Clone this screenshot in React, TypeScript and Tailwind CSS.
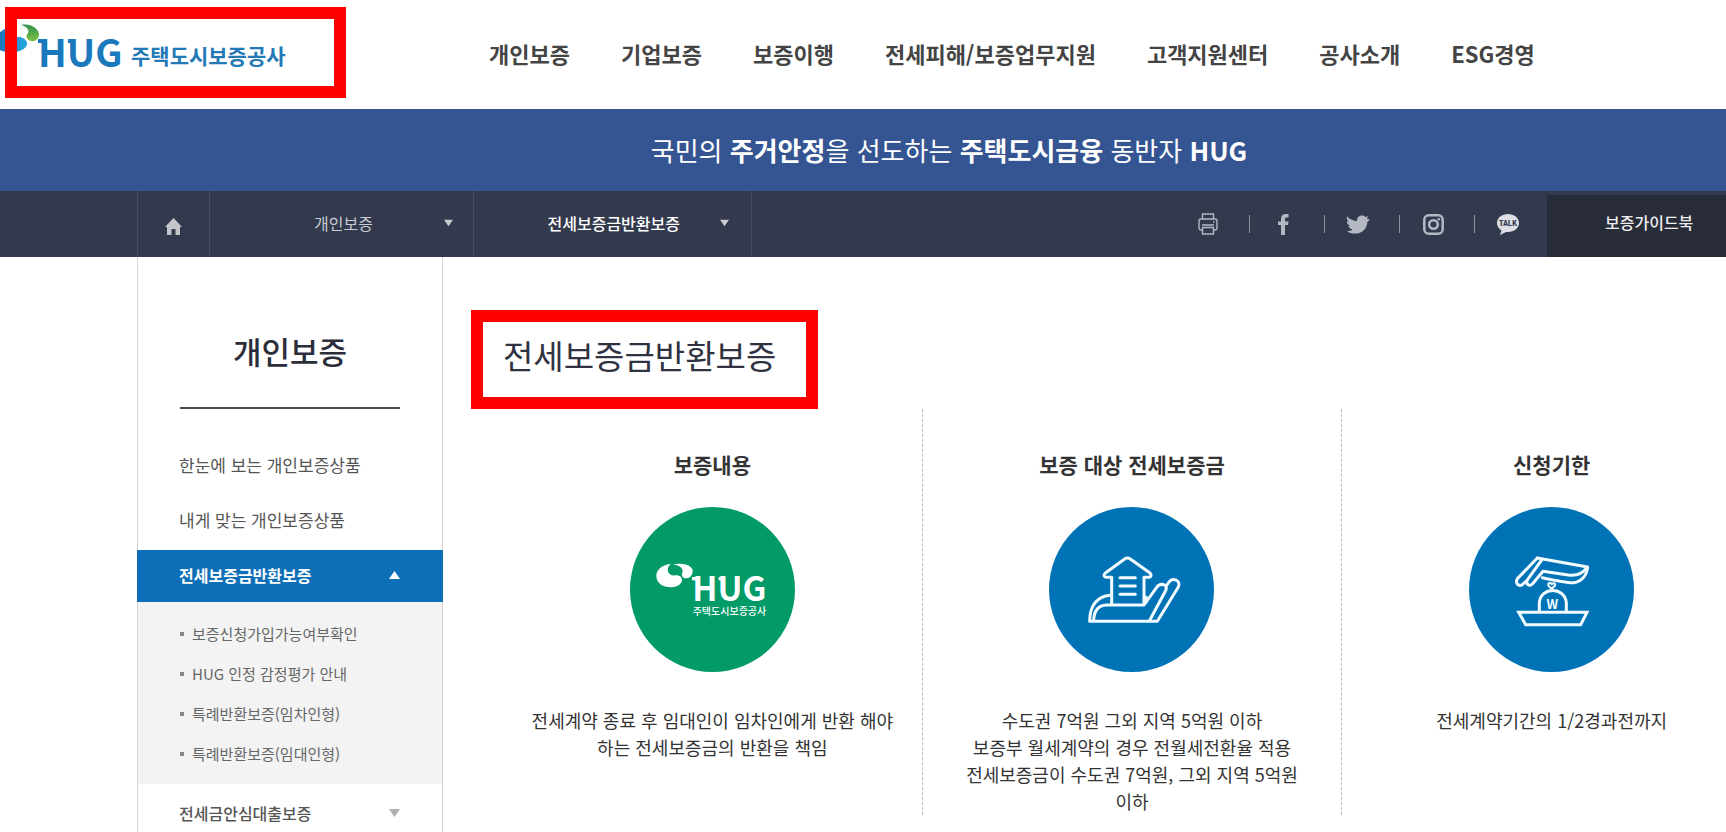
import type { ReactNode } from "react";

const NAV = [
  "개인보증",
  "기업보증",
  "보증이행",
  "전세피해/보증업무지원",
  "고객지원센터",
  "공사소개",
  "ESG경영",
];

const SUB_MENU = [
  "보증신청가입가능여부확인",
  "HUG 인정 감정평가 안내",
  "특례반환보증(임차인형)",
  "특례반환보증(임대인형)",
];

function Logo() {
  return (
    <a href="#" aria-label="HUG 주택도시보증공사" className="block">
      <svg width="300" height="76" viewBox="0 -8 300 76" aria-hidden="true">
        <defs>
          <linearGradient id="leaf" x1="0" y1="0" x2="0" y2="1">
            <stop offset="0" stopColor="#2f8f4e" />
            <stop offset="1" stopColor="#7cc142" />
          </linearGradient>
          <linearGradient id="drop" x1="0" y1="0" x2="1" y2="0">
            <stop offset="0" stopColor="#1b6fb8" />
            <stop offset="1" stopColor="#27a9e0" />
          </linearGradient>
        </defs>
        <path
          d="M8 3C-5 6-9 22 2 26c9 3 22 1 25-6 1-5-4-8-9-8C9 13 4 9 8 3Z"
          fill="url(#drop)"
        />
        <path
          d="M21 0c9-2 17 3 18 9 0 5-4 8-8 7-4-1-6-5-3-8 2-3-2-7-7-8Z"
          fill="url(#leaf)"
        />
        <g fill="#1a78bd" className="font-bold">
          <text x="38" y="42" fontSize="38">
            HUG
          </text>
          <rect x="38" y="14" width="5" height="4" />
          <rect x="68" y="14" width="5" height="4" />
        </g>
        <text x="131" y="39" fontSize="21" fill="#2279b5" className="font-bold">
          주택도시보증공사
        </text>
      </svg>
    </a>
  );
}

function Caret({ up = false, className }: { up?: boolean; className?: string }) {
  return (
    <svg width="11" height="8" viewBox="0 0 11 8" className={className} aria-hidden="true">
      <path d={up ? "M5.5 0 11 8H0Z" : "M0 0h11L5.5 8Z"} fill="currentColor" />
    </svg>
  );
}

function ShareLink({
  label,
  last = false,
  children,
}: {
  label: string;
  last?: boolean;
  children: ReactNode;
}) {
  return (
    <li className="flex items-center">
      <a href="#" aria-label={label} className="flex w-[66px] justify-center">
        {children}
      </a>
      {last ? <span className="w-1.5" /> : <span className="ml-2 h-[18px] w-px bg-[#8b909c]" />}
    </li>
  );
}

function ShareLinks() {
  return (
    <ul className="ml-auto flex items-center text-[#b3b8c3]">
      <ShareLink label="인쇄">
        <svg width="20" height="22" viewBox="0 0 20 22" fill="none" stroke="currentColor" strokeWidth="1.4">
          <path d="M4.500 6V1h11v5M4.500 17H3a2 2 0 0 1-2-2V8a2 2 0 0 1 2-2h14a2 2 0 0 1 2 2v7a2 2 0 0 1-2 2h-1.500" />
          <path d="M4.500 14.500h11V21h-11ZM4 12h12M15 9h1.500" />
        </svg>
      </ShareLink>
      <ShareLink label="페이스북">
        <svg width="11" height="21" viewBox="0 0 11 21" fill="currentColor">
          <path d="M3 21V11H0V7.500h3V5c0-3.300 1.800-5 5-5h2.500v3.500H8.800C7.400 3.500 7 4.100 7 5.300v2.200h3.500L10 11H7v10Z" />
        </svg>
      </ShareLink>
      <ShareLink label="트위터">
        <svg width="24" height="19" viewBox="0 0 25 19" fill="currentColor">
          <path d="M1 1c2.500 3 6 4.500 10.500 5C11 2.500 13.500 0 16.500 0c1.700 0 3 .7 4 1.800l2.700-.9-1.400 2.700 3.200.9-2.800 2.300C22 13.500 17 19 9.500 19 6 19 3 18 1 16.500c2.500 0 4.500-.5 6-2-2.200-.2-4-1.500-4.500-3.500h2C2.200 10 .8 8 .8 6l2 .5C1 5 .3 3 1 1Z" />
        </svg>
      </ShareLink>
      <ShareLink label="인스타그램">
        <svg width="21" height="21" viewBox="0 0 21 21" fill="none" stroke="currentColor" strokeWidth="2.500">
          <rect x="1.300" y="1.300" width="18.400" height="18.400" rx="4.500" />
          <circle cx="10.500" cy="10.500" r="4.300" />
          <circle cx="15.800" cy="5.200" r="1.300" fill="currentColor" stroke="none" />
        </svg>
      </ShareLink>
      <ShareLink label="카카오톡" last>
        <svg width="22" height="21" viewBox="0 0 22 21">
          <path
            d="M11 0c6 0 11 3.800 11 9s-5 9-11 9L9 18l-6 3 1.500-4.500C1.800 15 0 12 0 9c0-5.200 5-9 11-9Z"
            fill="#dcdfe5"
          />
          <text x="11" y="12" fontSize="7" textAnchor="middle" fill="#333a4d" className="font-black">
            TALK
          </text>
        </svg>
      </ShareLink>
    </ul>
  );
}

function Sidebar() {
  return (
    <aside className="ml-[137px] w-[306px] shrink-0 border-x border-[#d6d6d6]">
      <h2 className="mx-[42px] border-b-2 border-[#4b4b50] pt-[70px] pb-8 text-center text-[31px] leading-[48px] font-medium text-[#2b2d3a]">
        개인보증
      </h2>
      <ul className="pt-7 pb-[3px] text-[17px] text-[#555]">
        <li className="flex h-[55px] items-center pl-[41px]">
          <a href="#">한눈에 보는 개인보증상품</a>
        </li>
        <li className="flex h-[55px] items-center pl-[41px]">
          <a href="#">내게 맞는 개인보증상품</a>
        </li>
      </ul>
      <button
        type="button"
        className="-mx-px flex h-[52px] w-[306px] items-center justify-between bg-[#0d6fb8] pr-[43px] pb-0.5 pl-[42px] text-base font-bold text-white"
      >
        전세보증금반환보증
        <Caret up />
      </button>
      <ul className="bg-[#f3f3f3] pt-3 pb-[10px] pl-[42px] text-[15px] text-[#666]">
        {SUB_MENU.map((label) => (
          <li key={label} className="flex h-10 items-center gap-2">
            <span className="size-1 bg-[#888]" />
            <a href="#">{label}</a>
          </li>
        ))}
      </ul>
      <button
        type="button"
        className="flex w-full items-center justify-between pt-[17px] pr-[42px] pb-[7px] pl-[41px] text-base font-medium text-[#555]"
      >
        전세금안심대출보증
        <Caret className="text-[#b0b0b0]" />
      </button>
    </aside>
  );
}

function HugIcon() {
  return (
    <svg width="165" height="165" viewBox="90 50 495 495" className="rounded-full bg-[#029a67]">
      <g fill="#fff">
        <path d="M212 220c-28 4-44 20-43 38 1 22 22 34 45 33 20-1 33-12 32-24-1-9-10-13-21-12-22 2-29-20-13-35Z" />
        <path d="M218 222c22-5 57-1 60 18 1 14-8 24-19 24-10 0-16-8-12-17 5-12-8-22-29-25Z" />
        <rect x="276" y="260" width="14" height="10" />
        <rect x="356" y="260" width="14" height="10" />
        <text x="277" y="331" fontSize="100" className="font-bold">
          HUG
        </text>
        <text x="278" y="373" fontSize="30" className="font-medium">
          주택도시보증공사
        </text>
      </g>
    </svg>
  );
}

function HouseIcon() {
  return (
    <svg width="165" height="165" viewBox="57 50 495 495" className="rounded-full bg-[#0073b7]">
      <g fill="none" stroke="#f2fbff" strokeWidth="9" strokeLinecap="round" strokeLinejoin="round">
        <path d="M245 340V261H228Q217 256 226 248L284 206Q292 200 301 206L360 248Q368 257 357 261H342V340" />
        <path d="M270 262h46M270 287h46M270 312h46" />
        <path d="M240 315C205 318 179 342 179 393H382L445 290C454 270 428 260 417 275L409 287" />
        <path d="M191 388C193 358 208 344 232 344H342L380 291C390 277 413 280 408 299L360 388" />
        <path d="M348 320V336" />
      </g>
    </svg>
  );
}

function ScaleIcon() {
  return (
    <svg width="165" height="165" viewBox="54 50 495 495" className="rounded-full bg-[#0073b7]">
      <g fill="none" stroke="#f2fbff" strokeWidth="9" strokeLinecap="round" strokeLinejoin="round">
        <path d="M259 203 200 264C190 280 206 292 217 280L226 272" />
        <path d="M272 209 228 270C224 286 239 288 246 279L276 243 352 254C382 257 398 246 406 233" />
        <path d="M259 203 410 230C408 256 390 275 368 277 350 278 320 272 274 262" />
        <path d="M302 295 292 286C290 276 300 276 302 282 306 276 314 278 312 286Z" strokeWidth="6" />
        <path d="M265 362V338C268 288 342 288 346 338V362" />
        <path d="M203 366H408L389 403H224Z" strokeLinejoin="miter" />
      </g>
      <text x="304" y="355" fontSize="38" textAnchor="middle" fill="#f2fbff" className="font-bold">
        W
      </text>
    </svg>
  );
}

const CARDS = [
  {
    title: "보증내용",
    icon: <HugIcon />,
    lines: ["전세계약 종료 후 임대인이 임차인에게 반환 해야", "하는 전세보증금의 반환을 책임"],
  },
  {
    title: "보증 대상 전세보증금",
    icon: <HouseIcon />,
    lines: [
      "수도권 7억원 그외 지역 5억원 이하",
      "보증부 월세계약의 경우 전월세전환율 적용",
      "전세보증금이 수도권 7억원, 그외 지역 5억원",
      "이하",
    ],
  },
  {
    title: "신청기한",
    icon: <ScaleIcon />,
    lines: ["전세계약기간의 1/2경과전까지"],
  },
];

export default function App() {
  return (
    <div
      lang="ko"
      className="flex min-h-screen flex-col overflow-hidden bg-white font-['Noto_Sans_CJK_KR','Noto_Sans',sans-serif] whitespace-nowrap"
    >
      <header className="relative flex h-[109px] items-center">
        <div className="w-[489px] shrink-0">
          <Logo />
        </div>
        <nav className="flex gap-[51px] pb-0.5 text-[22px] font-bold text-[#444]">
          {NAV.map((label) => (
            <a key={label} href="#">
              {label}
            </a>
          ))}
        </nav>
        <div className="pointer-events-none absolute top-[7px] left-[5px] h-[91px] w-[341px] border-[12px] border-[#fe0000]" />
      </header>

      <p className="flex h-[82px] items-center justify-center bg-[#355592] pb-0.5 pl-[172px] text-[26px] text-white">
        <span>
          국민의 <strong>주거안정</strong>을 선도하는 <strong>주택도시금융</strong> 동반자{" "}
          <strong>HUG</strong>
        </span>
      </p>

      <div className="flex h-[66px] bg-[#333a4d] pl-[137px] text-base">
        <a
          href="#"
          aria-label="홈"
          className="flex w-[72px] items-center justify-center border-l border-[#454b5c] pt-1 text-[#c4c5c9]"
        >
          <svg width="17" height="17" viewBox="0 0 17 17" fill="currentColor" aria-hidden="true">
            <path d="M8.500 0 17 9h-2v8h-4.500v-6h-4v6H2V9H0Z" />
          </svg>
        </a>
        <button
          type="button"
          className="flex w-[264px] items-center justify-end border-l border-[#454b5c] pr-5 pb-0.5 text-[#c9cbd1]"
        >
          개인보증
          <Caret className="ml-[71px] w-[9px]" />
        </button>
        <button
          type="button"
          className="flex w-[279px] items-center justify-end border-x border-[#454b5c] pr-[22px] pb-0.5 font-medium text-white"
        >
          전세보증금반환보증
          <Caret className="ml-10 w-[9px] text-[#c9cbd1]" />
        </button>
        <ShareLinks />
        <a
          href="#"
          className="mt-1 flex w-[179px] items-center bg-[#282c39] pb-2 pl-[58px] font-medium text-[#eee]"
        >
          보증가이드북
        </a>
      </div>

      <div className="flex flex-1">
        <Sidebar />
        <main className="min-w-0 flex-1 pt-[53px]">
          <h1 className="ml-7 flex h-[99px] w-[347px] items-center border-[12px] border-[#fe0000] pb-2 pl-5 text-[33px] text-[#2f3240]">
            전세보증금반환보증
          </h1>
          <div className="-mr-9 ml-[60px] grid grid-cols-3">
            {CARDS.map((card) => (
              <section
                key={card.title}
                className="flex flex-col items-center border-r border-dashed border-[#bbb] pt-[39px] text-[#333]"
              >
                <h3 className="mb-[27px] text-[21px] leading-8 font-bold">{card.title}</h3>
                {card.icon}
                <p className="mt-[35px] text-center text-lg leading-[27px]">
                  {card.lines.map((line) => (
                    <span key={line} className="block">
                      {line}
                    </span>
                  ))}
                </p>
              </section>
            ))}
          </div>
        </main>
      </div>
    </div>
  );
}
